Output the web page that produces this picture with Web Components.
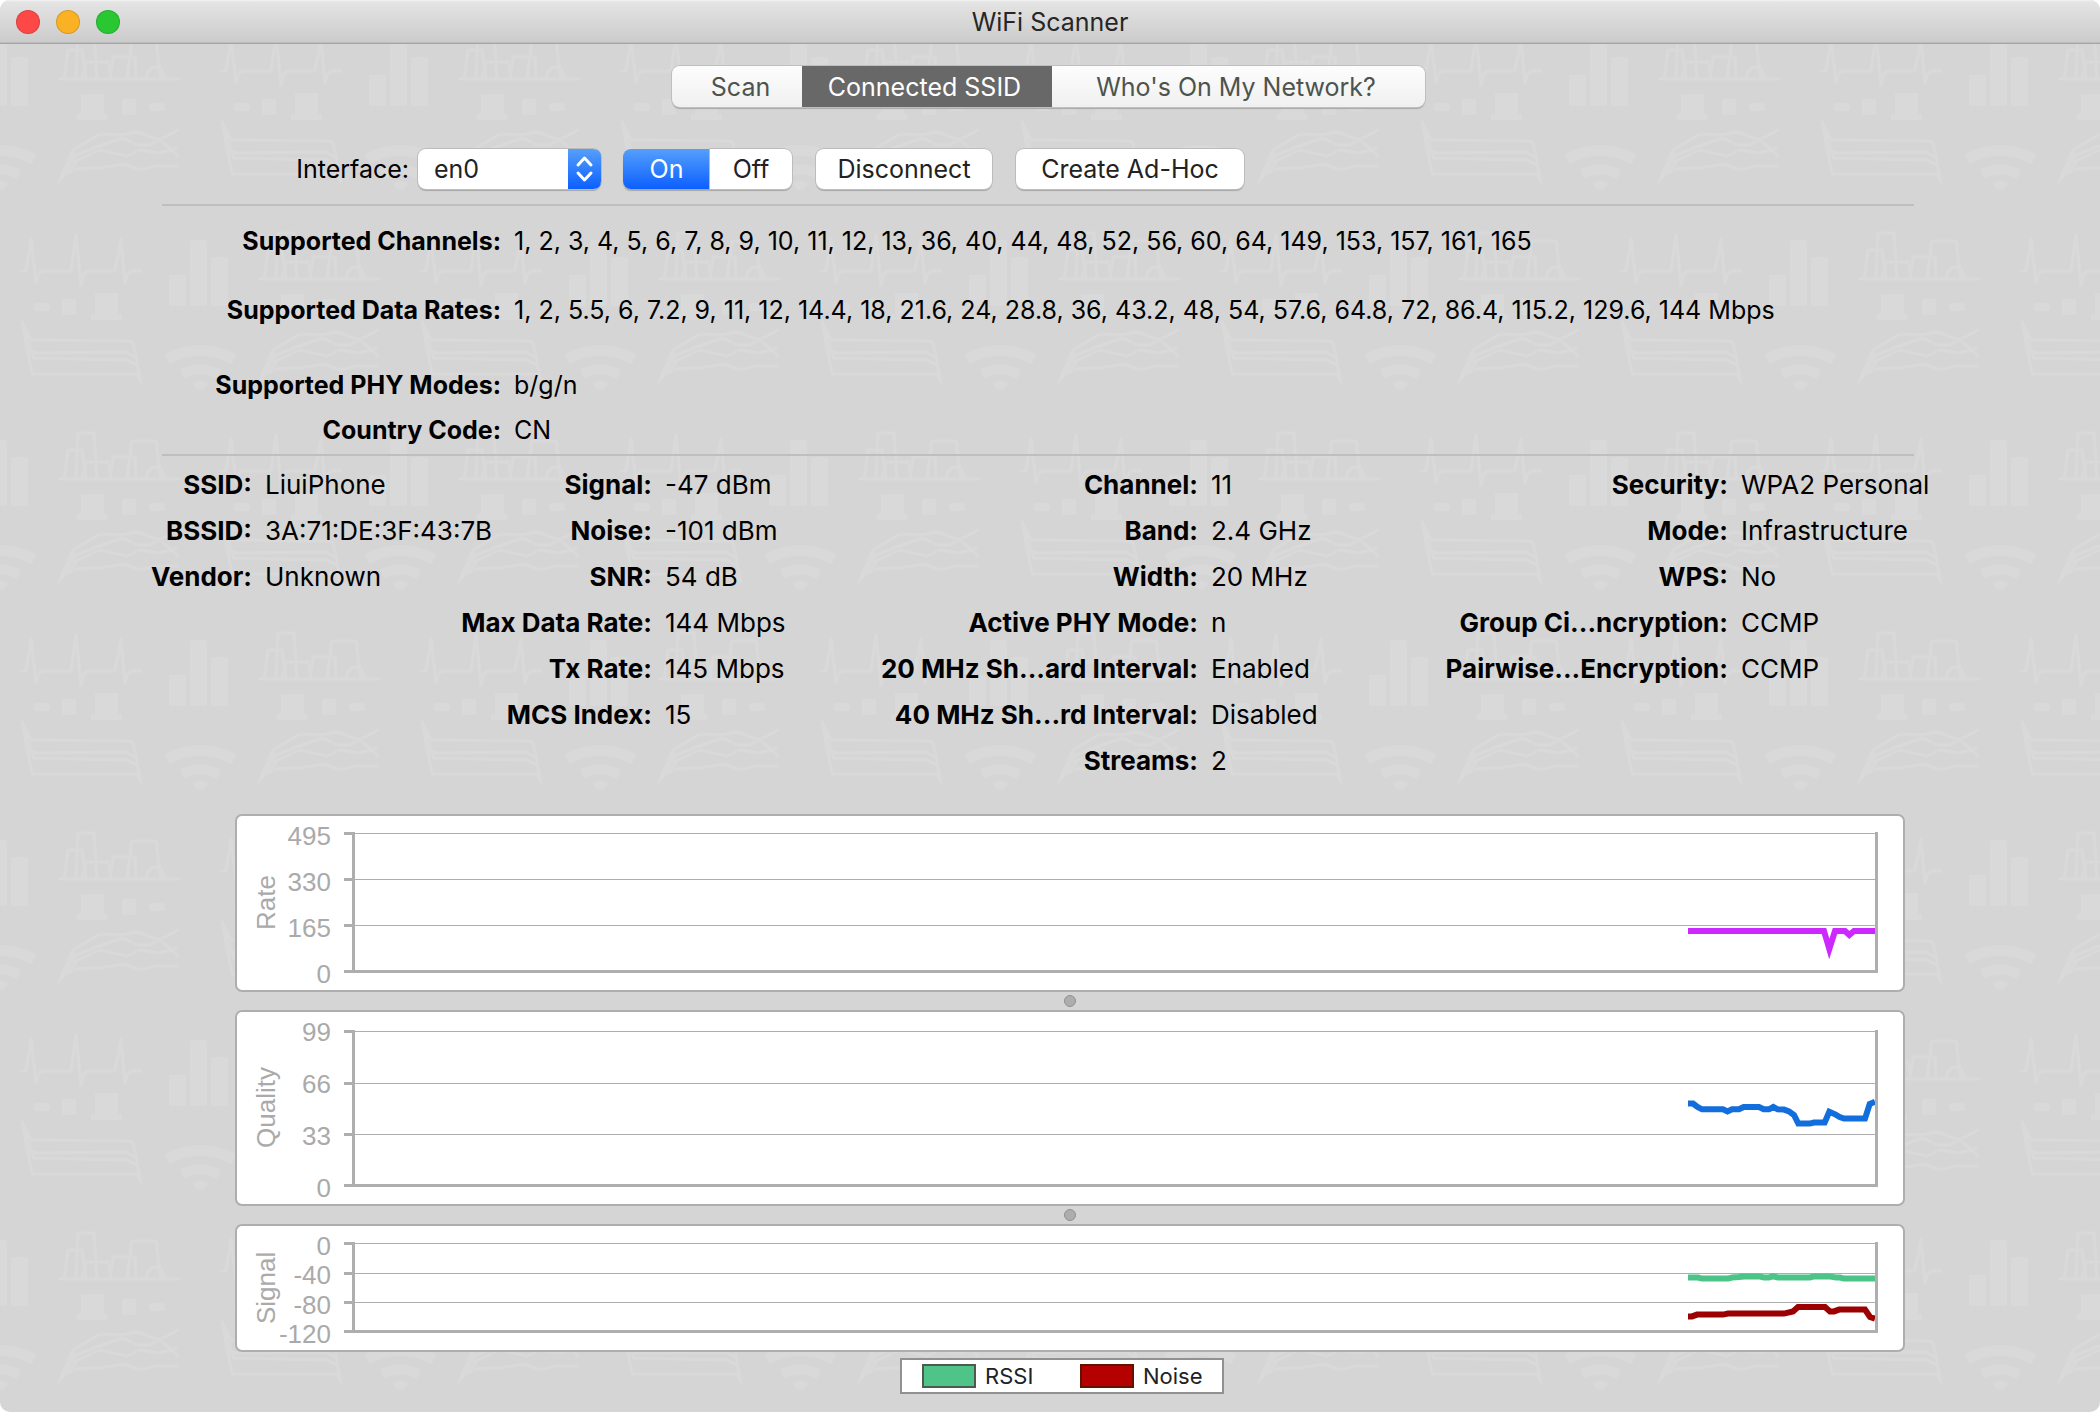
<!DOCTYPE html>
<html lang="en">
<head>
<meta charset="utf-8">
<title>WiFi Scanner</title>
<style>
  html, body { margin: 0; background: #fff; }
  body { font: 25px/32px Inter, "Liberation Sans", sans-serif; color: #000; }
</style>
</head>
<body>
<scanner-window></scanner-window>

<script>
const define = (name, html, setup) => {
  const template = document.createElement('template');
  template.innerHTML = html;
  customElements.define(name, class extends HTMLElement {
    constructor() {
      super();
      this.attachShadow({ mode: 'open' }).append(template.content.cloneNode(true));
    }
    connectedCallback() { if (setup) setup(this, this.shadowRoot); }
  });
};

/* Faint tiled wallpaper of charts, bars and wifi signs */
define('chart-wallpaper', `
<style>
  :host { display: block; position: absolute; inset: 0; z-index: -1; overflow: hidden; }
  svg { display: block; width: 100%; height: 100%; }
</style>
<svg aria-hidden="true">
  <defs>
    <g id="motif" fill="none" stroke="#d9d9d9" stroke-width="3" stroke-linejoin="round" stroke-linecap="round">
      <path d="M22 71H26L31 39L36 83Q38 71 43 71H71L76 35L81 85Q83 71 88 71H115L121 39L125 83Q128 71 132 71H141"/>
      <path d="M22 122L32 174H137L141 182L133 143L130 141L31 140L22 122L30 151L36 153L125 152L133 156M24 130L34 158L127 160L135 164"/>
      <path d="M260 79H264L268 50H282L286 79M276 79L278 33H294L297 79M281 79L286 62H308L311 79M310 79L313 57H335L336 79M327 79L332 41H356L361 79M345 79Q349 67 355 67Q363 67 365 79M264 79H379"/>
      <path d="M259 182L273 150L300 134L320 135L337 132L360 140L378 156M273 156L300 146L322 138L338 145H350L378 130M273 162L300 150L327 156L340 150L360 153L376 148M266 174L275 169L300 168L324 164L340 170L356 166H378M262 178L275 154M264 176L277 162"/>
      <g fill="#d9d9d9" stroke="none">
        <rect x="34" y="103" width="16" height="8" rx="3"/><rect x="62" y="99" width="14" height="16" rx="2"/>
        <path d="M95 93H118V114H122V120H91V114H95Z"/>
        <rect x="169" y="75" width="17" height="31" rx="2"/><rect x="190" y="40" width="17" height="66" rx="2"/><rect x="211" y="57" width="17" height="49" rx="2"/>
        <path d="M281 94H304V114H307V120H277V114H281Z"/>
        <rect x="322" y="99" width="14" height="16" rx="2"/><rect x="349" y="103" width="16" height="8" rx="3"/>
        <path d="M193 183Q200 179 208 183Q206 190 200 190Q195 190 193 183Z"/>
      </g>
      <path d="M167 159Q200 142 234 159" stroke-width="11" stroke-linecap="butt"/>
      <path d="M182 174Q200 165 219 174" stroke-width="10" stroke-linecap="butt"/>
    </g>
    <pattern id="tile" width="400" height="400" patternUnits="userSpaceOnUse">
      <use href="#motif" x="-200"/><use href="#motif" x="200"/><use href="#motif" y="200"/>
    </pattern>
  </defs>
  <rect width="100%" height="100%" fill="url(#tile)"/>
</svg>`);

define('title-bar', `
<style>
  :host { display: grid; grid-template-columns: 1fr auto 1fr; align-items: center; height: 43px;
    border-bottom: 1px solid #a4a4a4; background: linear-gradient(#f4f4f4 0, #e4e4e4 2px, #cbcbcb);
    color: #262626; box-shadow: inset 0 -1px #bdbdbd; }
  .lights { display: flex; gap: 16px; padding-left: 16px; }
  button { width: 24px; height: 24px; padding: 0; border: 1px solid #0002; border-radius: 50%; background: var(--c); }
  h1 { margin: 0; font: inherit; }
</style>
<div class="lights">
  <button aria-label="Close" style="--c:#fc4948"></button>
  <button aria-label="Minimize" style="--c:#fab124"></button>
  <button aria-label="Zoom" style="--c:#29c732"></button>
</div>
<h1><slot></slot></h1>`);

define('view-tabs', `
<style>
  :host { display: flex; justify-content: center; padding-right: 4px; }
  nav { display: flex; height: 41px; border-radius: 8px; box-shadow: 0 0 0 1px #bfbfbf, 0 2px 1px #a8a8a8; }
  button { box-sizing: border-box; border: 0; padding: 0; font: inherit; color: #4d544e;
    background: linear-gradient(#fdfdfd, #f0f0f0); }
  button:first-child { width: 130px; padding-left: 8px; border-radius: 8px 0 0 8px; }
  button[aria-pressed=true] { width: 250px; padding-right: 4px; color: #fff; background: #686868; }
  button:last-child { width: 373px; padding-right: 4px; border-radius: 0 8px 8px 0; }
</style>
<nav>
  <button aria-pressed="false">Scan</button><button aria-pressed="true">Connected SSID</button><button aria-pressed="false">Who's On My Network?</button>
</nav>`);

define('interface-bar', `
<style>
  :host { display: flex; align-items: center; padding-left: 295px; color: #222; }
  label { width: 114px; margin-right: 9px; text-align: right; white-space: nowrap; color: #000; }
  .select { position: relative; display: flex; width: 183px; height: 40px; }
  select { appearance: none; flex: 1; border: 0; border-radius: 8px; margin: 0; padding: 0 16px; font: inherit; color: inherit;
    background: #fff; box-shadow: 0 0 0 1px #bcbcbc, 0 2px 1px #a8a8a8; }
  .select svg { position: absolute; right: 0; top: 0; pointer-events: none; }
  button { box-sizing: border-box; height: 40px; border: 0; border-radius: 8px; padding: 0 21px; font: inherit; color: inherit;
    background: #fff; box-shadow: 0 0 0 1px #bcbcbc, 0 2px 1px #a8a8a8; white-space: nowrap; }
  .switch { display: flex; margin-left: 22px; border-radius: 8px; }
  .switch button { width: 82px; padding: 0; border-radius: 0 8px 8px 0; }
  .switch .on { width: 87px; border-radius: 8px 0 0 8px; color: #fff; background: linear-gradient(#559ffb, #0c5fff); box-shadow: 0 2px 1px #a8a8a8; }
  .disconnect { margin-left: 24px; width: 176px; }
  .adhoc { margin-left: 24px; width: 228px; }
</style>
<label for="iface">Interface:</label>
<div class="select">
  <select id="iface"><option>en0</option></select>
  <svg width="33" height="40" viewBox="0 0 33 40" aria-hidden="true">
    <defs><linearGradient id="g" x2="0" y2="1"><stop stop-color="#559ffb"/><stop offset="1" stop-color="#0c5fff"/></linearGradient></defs>
    <path d="M0 0H25Q33 0 33 8V32Q33 40 25 40H0Z" fill="url(#g)"/>
    <path d="M10 16L16.500 9L23 16M10 24L16.500 31L23 24" fill="none" stroke="#fff" stroke-width="3" stroke-linecap="round" stroke-linejoin="round"/>
  </svg>
</div>
<div class="switch"><button class="on" aria-pressed="true">On</button><button aria-pressed="false">Off</button></div>
<button class="disconnect">Disconnect</button>
<button class="adhoc">Create Ad-Hoc</button>`);

/* A list of "label: value" rows; rows come one per line as "label|value" */
define('fact-list', `
<style>
  :host { display: block; }
  dl { display: grid; grid-template-columns: var(--label) 1fr; grid-template-rows: var(--rows, none); grid-auto-rows: 46px; column-gap: 13px; margin: 0; }
  dt { font-weight: 700; text-align: right; white-space: nowrap; }
  dd { margin: 0; white-space: nowrap; }
</style>
<dl></dl>`, (host, root) => {
  const dl = root.querySelector('dl');
  for (const line of host.getAttribute('rows').split('\n')) {
    const [label, value] = line.trim().split('|');
    const dt = document.createElement('dt'), dd = document.createElement('dd');
    dt.textContent = label + ':';
    dd.textContent = value;
    dl.append(dt, dd);
  }
});

define('history-chart', `
<style>
  :host { display: flex; box-sizing: border-box; height: var(--h); border: 2px solid #aeaeae; border-radius: 7px; background: #fff;
    padding: 0 25px 0 14px; font: 26px/28px "Liberation Sans", Arial, sans-serif; color: #aaa; }
  .name { width: 30px; line-height: 30px; writing-mode: vertical-rl; transform: rotate(180deg); text-align: center; }
  .ticks { display: flex; flex-direction: column; justify-content: space-between; box-sizing: border-box; width: 50px; padding: 6px 0 2px;
    align-items: flex-end; white-space: nowrap; }
  svg { flex: 1; min-width: 0; height: 100%; margin-left: 13px; }
  path { fill: none; vector-effect: non-scaling-stroke; }
</style>
<div class="name"></div><div class="ticks"></div>
<svg preserveAspectRatio="none" role="img"></svg>`, (host, root) => {
  const { name, ticks, lines, height } = host.dataset;
  root.querySelector('.name').textContent = name;
  for (const t of ticks.split(',')) {
    const span = document.createElement('span');
    span.textContent = t;
    root.querySelector('.ticks').append(span);
  }
  const svg = root.querySelector('svg');
  svg.setAttribute('viewBox', '0 0 1534 ' + height);
  svg.setAttribute('aria-label', name + ' history');
  const ys = lines.split(',').map(Number), top = ys[0], bottom = ys[ys.length - 1];
  const draw = (d, color, width, limit = 10) => {
    const p = document.createElementNS('http://www.w3.org/2000/svg', 'path');
    p.setAttribute('d', d);
    p.setAttribute('stroke', color);
    p.setAttribute('stroke-width', width);
    p.setAttribute('stroke-miterlimit', limit);
    svg.append(p);
  };
  for (const y of ys) {
    draw(`M10 ${y + .5}H1531`, '#aeaeae', 1);
    draw(`M0 ${y + .5}H10`, '#aeaeae', 3);
  }
  for (const s of host.querySelectorAll('chart-series'))
    draw('M' + s.getAttribute('points'), s.getAttribute('color'), 6);
  draw(`M9.5 ${top - 1}V${bottom + .5}H1532.5V${top - 1}`, '#aeaeae', 3);
});
define('chart-series', `<style>:host { display: none; }</style>`);

define('split-grip', `
<style>
  :host { display: flex; align-items: center; justify-content: center; height: 18px; }
  i { width: 10px; height: 10px; border: 1px solid #8f9193; border-radius: 50%; background: #abadaf; }
</style><i></i>`);

define('chart-legend', `
<style>
  :host { display: flex; justify-content: center; margin-top: 6px; padding-right: 16px; font-size: 22px; line-height: 32px; color: #222; }
  ul { display: flex; box-sizing: border-box; width: 324px; margin: 0; padding: 0 0 0 20px; list-style: none; background: #fff; border: 2px solid #919191; }
  li { display: flex; align-items: center; gap: 9px; }
  li:first-child { width: 158px; }
  i { box-sizing: border-box; width: 54px; height: 24px; border: 2px solid; }
  .rssi { background: #4fc489; border-color: #4d5a52; }
  .noise { background: #b40000; border-color: #641100; }
</style>
<ul><li><i class="rssi"></i>RSSI</li><li><i class="noise"></i>Noise</li></ul>`);

define('scanner-window', `
<style>
  :host { display: flex; flex-direction: column; position: relative; z-index: 0; min-height: 100vh; border-radius: 10px;
    overflow: hidden; background: #d5d5d5; }
  view-tabs { margin-top: 22px; }
  interface-bar { margin-top: 42px; }
  hr { height: 2px; border: 0; margin: 0 186px 0 162px; background: #bfbfbf; flex: none; }
  interface-bar + hr { margin-top: 15px; }
  .support { --label: 339px; --rows: 69px 75px 45px 40px; padding: 19px 0 0 162px; }
  .details { display: grid; grid-template-columns: 310fr 416fr 560fr 530fr; padding: 13px 142px 0; font-size: 26px; }
  .details > * { min-width: 0; }
  .charts { margin: 23px 195px 0 235px; }
</style>
<chart-wallpaper></chart-wallpaper>
<title-bar>WiFi Scanner</title-bar>
<view-tabs></view-tabs>
<interface-bar></interface-bar>
<hr>
<fact-list class="support" rows="Supported Channels|1, 2, 3, 4, 5, 6, 7, 8, 9, 10, 11, 12, 13, 36, 40, 44, 48, 52, 56, 60, 64, 149, 153, 157, 161, 165
Supported Data Rates|1, 2, 5.5, 6, 7.2, 9, 11, 12, 14.4, 18, 21.6, 24, 28.8, 36, 43.2, 48, 54, 57.6, 64.8, 72, 86.4, 115.2, 129.6, 144 Mbps
Supported PHY Modes|b/g/n
Country Code|CN"></fact-list>
<hr>
<div class="details">
  <fact-list style="--label:110px" rows="SSID|LiuiPhone
BSSID|3A:71:DE:3F:43:7B
Vendor|Unknown"></fact-list>
  <fact-list style="--label:200px" rows="Signal|-47 dBm
Noise|-101 dBm
SNR|54 dB
Max Data Rate|144 Mbps
Tx Rate|145 Mbps
MCS Index|15"></fact-list>
  <fact-list style="--label:330px" rows="Channel|11
Band|2.4 GHz
Width|20 MHz
Active PHY Mode|n
20 MHz Sh...ard Interval|Enabled
40 MHz Sh...rd Interval|Disabled
Streams|2"></fact-list>
  <fact-list style="--label:300px" rows="Security|WPA2 Personal
Mode|Infrastructure
WPS|No
Group Ci...ncryption|CCMP
Pairwise...Encryption|CCMP"></fact-list>
</div>
<div class="charts">
  <history-chart style="--h:178px" data-name="Rate" data-ticks="495,330,165,0" data-lines="17,63,109,155" data-height="174">
    <chart-series color="#cc29ff" points="1344 115L1480 115L1485.300 133L1491 115L1501 115L1505.300 119L1510 115L1531 115"></chart-series>
  </history-chart>
  <split-grip></split-grip>
  <history-chart style="--h:196px" data-name="Quality" data-ticks="99,66,33,0" data-lines="19,71,122,173" data-height="192">
    <chart-series color="#126edc" points="1344 91.600L1349 91.600L1353.500 95L1358 97.300L1379 97.300L1383.500 99.400L1388 97.300L1395 97.300L1399.700 95L1415 95L1419.700 97.300L1425 97.300L1429.300 95L1433.700 97.300L1440 97.600L1445 99.400L1450 103L1454.300 111.600L1465.700 111.600L1470 110.500L1480.700 110.500L1485.300 99.800L1491.700 102.600L1495.700 105L1500 106.600L1521 106.600L1525.700 92L1531 89.800"></chart-series>
  </history-chart>
  <split-grip></split-grip>
  <history-chart style="--h:128px" data-name="Signal" data-ticks="0,-40,-80,-120" data-lines="17,47,76,105" data-height="124">
    <chart-series color="#4dc487" points="1344 51.500L1354 51.500L1358 52.600L1384 52.600L1388 51.500L1395 51L1400 50.400L1415 50.400L1420 51.500L1425 51.500L1429 50.400L1434 51.500L1466 51.500L1470 50.400L1485 50.400L1492 51.500L1496 51.500L1500 52.600L1531 52.600"></chart-series>
    <chart-series color="#9c0000" points="1344 90.400L1348 90.400L1353 88.600L1379 88.600L1384 87.600L1440 87.600L1449 85.400L1454 81L1481 81L1486 85.400L1490 85.400L1495 83.600L1521 83.600L1526 91L1531 92.600"></chart-series>
  </history-chart>
  <chart-legend></chart-legend>
</div>`);
</script>
</body>
</html>
